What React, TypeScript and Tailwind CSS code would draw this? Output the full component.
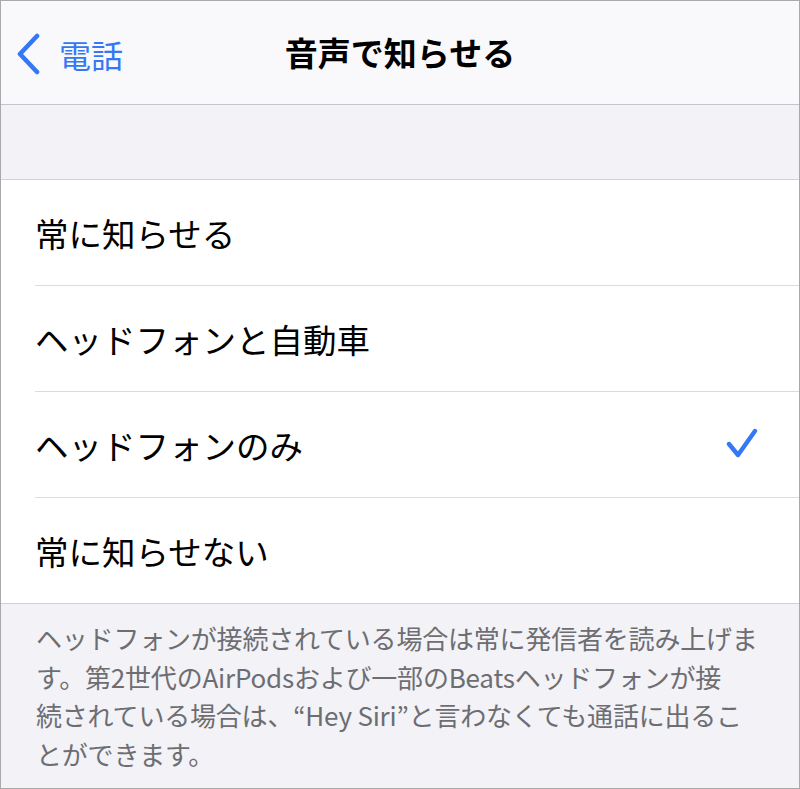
import React from "react";

const rows = ["常に知らせる", "ヘッドフォンと自動車", "ヘッドフォンのみ", "常に知らせない"];
const selected = 2;

function Chevron() {
  return (
    <svg width="28" height="42" viewBox="0 0 28 42" fill="none" aria-hidden="true">
      <path d="M22 3 L5 21 L22 39" stroke="#3478f6" strokeWidth="4.6" strokeLinecap="round" strokeLinejoin="round" />
    </svg>
  );
}

function Check() {
  return (
    <svg width="36" height="34" viewBox="0 0 36 34" fill="none" aria-hidden="true">
      <path d="M4 16 L13 27 L30 3" stroke="#3478f6" strokeWidth="4.4" strokeLinecap="round" strokeLinejoin="round" />
    </svg>
  );
}

export default function App() {
  return (
    <div
      className="flex h-[789px] w-[800px] flex-col overflow-hidden border border-[#a9a9ab] bg-[#f2f2f7]"
      style={{ fontFamily: '"Noto Sans CJK JP", "Noto Sans", sans-serif' }}
    >
      <header className="relative flex h-[104px] shrink-0 items-center border-b border-[#c6c6c8] bg-[#f9f9fb]">
        <div className="flex items-center gap-[16px] pl-[14px] pt-[2px] text-[32px] leading-none text-[#3478f6]">
          <Chevron />
          <span>電話</span>
        </div>
        <h1 className="absolute left-0 right-0 text-center text-[33px] font-bold leading-none text-black">
          音声で知らせる
        </h1>
      </header>

      <div className="h-[75px] shrink-0 border-b border-[#d1d1d6]" />

      <ul className="shrink-0 border-b border-[#d1d1d6] bg-white">
        {rows.map((label, i) => (
          <li key={label} className="pl-[34px]">
            <div
              className={`flex items-center justify-between pr-[38px] ${
                i < rows.length - 1 ? "h-[106px] border-b border-[#dcdce0]" : "h-[105px]"
              }`}
            >
              <span className="text-[33.5px] leading-none text-black">{label}</span>
              {i === selected && <Check />}
            </div>
          </li>
        ))}
      </ul>

      <p className="whitespace-nowrap pl-[35px] pt-[15px] text-[26px] leading-[38.5px] tracking-[-0.2px] text-[#6d6d72]">
        ヘッドフォンが接続されている場合は常に発信者を読み上げま
        <br />
        す。第2世代のAirPodsおよび一部のBeatsヘッドフォンが接
        <br />
        続されている場合は、“Hey Siri”と言わなくても通話に出るこ
        <br />
        とができます。
      </p>
    </div>
  );
}
